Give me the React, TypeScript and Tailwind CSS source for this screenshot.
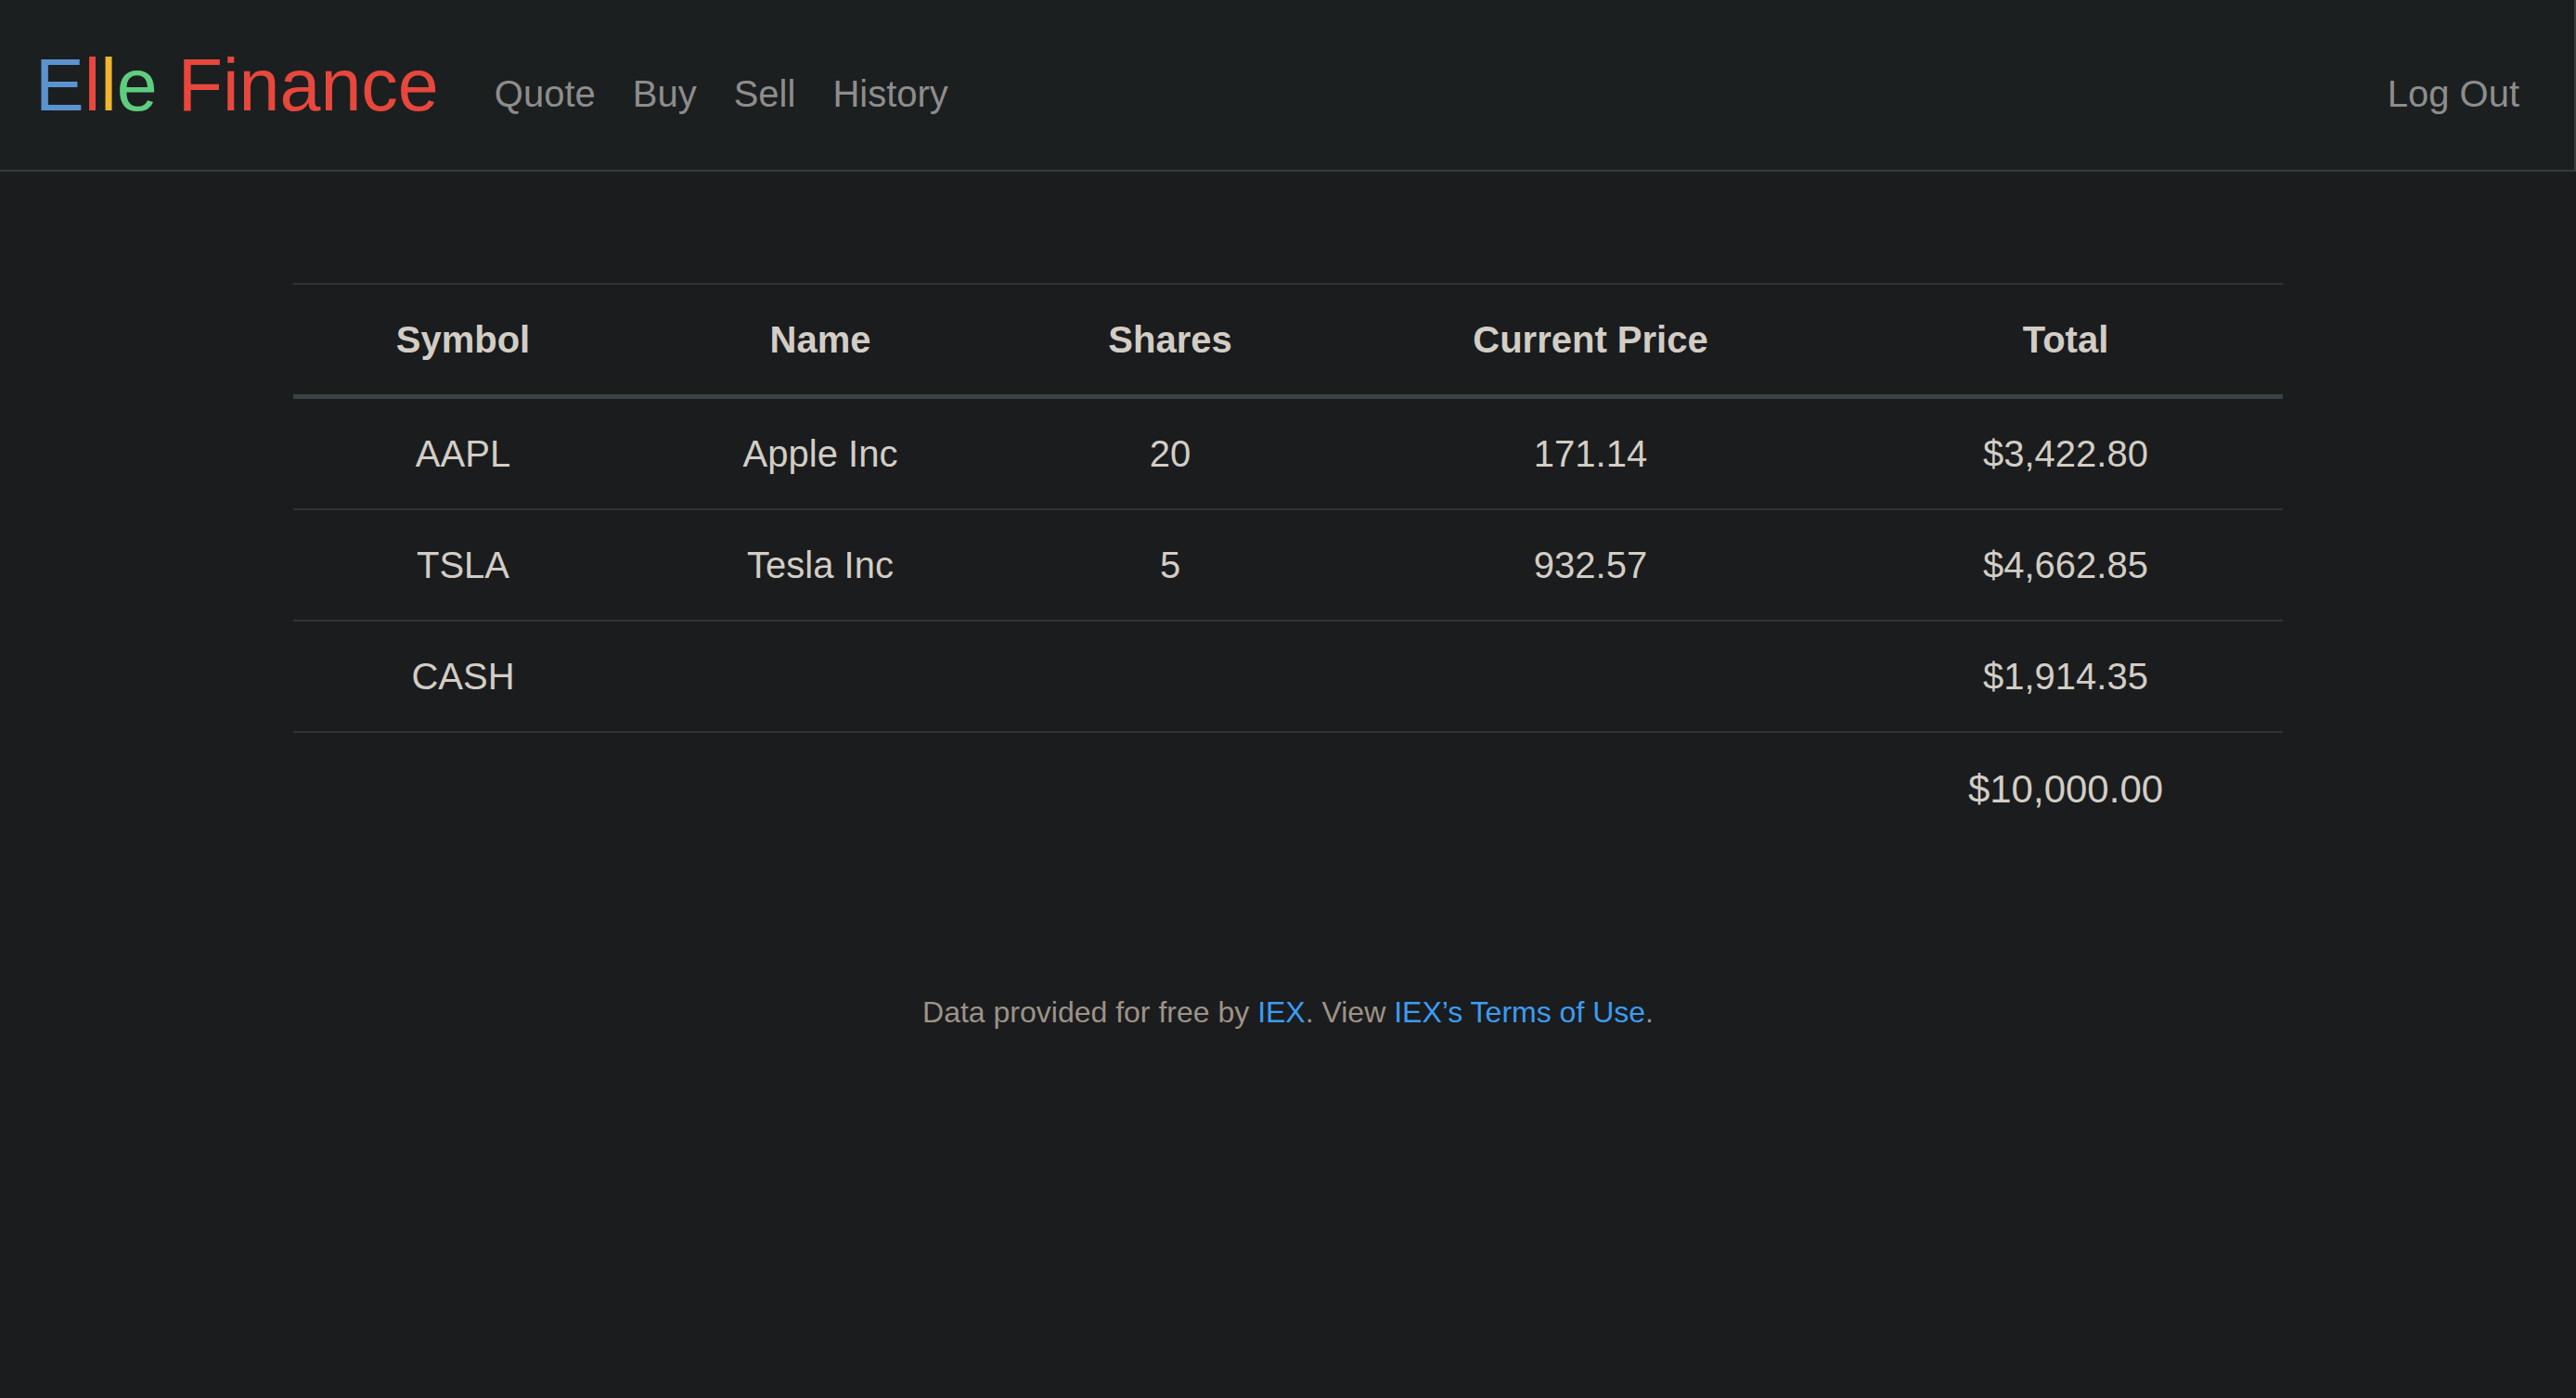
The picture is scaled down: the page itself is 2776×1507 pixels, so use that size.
export default function App() {
  const holdings = [
    { symbol: "AAPL", name: "Apple Inc", shares: "20", price: "171.14", total: "$3,422.80" },
    { symbol: "TSLA", name: "Tesla Inc", shares: "5", price: "932.57", total: "$4,662.85" },
    { symbol: "CASH", name: "", shares: "", price: "", total: "$1,914.35" },
  ];

  const links = ["Quote", "Buy", "Sell", "History"];

  return (
    <div
      className="min-h-screen bg-[#1b1c1e] text-[#d2cdc5]"
      style={{ fontFamily: '"Liberation Sans", Arial, sans-serif' }}
    >
      {/* Navbar */}
      <nav className="flex h-[185px] items-center border-r-2 border-b-2 border-[#383c3f] bg-[#1c1f20] pl-[38px] pr-[39px]">
        <a className="text-[79px] leading-[117px]">
          <span className="text-[#5b93d1]">E</span>
          <span className="text-[#e8473d]">l</span>
          <span className="text-[#f0b52f]">l</span>
          <span className="text-[#5fcd80]">e</span>{" "}
          <span className="text-[#e8473d]">Finance</span>
        </a>
        <ul className="ml-[40px] flex pt-[19px]">
          {links.map((link) => (
            <li key={link} className="px-[20px] text-[40px] leading-[60px] text-[#8d8d8d]">
              {link}
            </li>
          ))}
        </ul>
        <ul className="ml-auto flex pt-[19px]">
          <li className="px-[20px] text-[40px] leading-[60px] text-[#8d8d8d]">Log Out</li>
        </ul>
      </nav>

      {/* Portfolio table */}
      <main className="pt-[120px]">
        <table className="mx-auto w-[2144px] table-fixed border-collapse text-center text-[40px] leading-[60px]">
          <colgroup>
            <col className="w-[366px]" />
            <col className="w-[404px]" />
            <col className="w-[350px]" />
            <col className="w-[556px]" />
            <col className="w-[468px]" />
          </colgroup>
          <thead>
            <tr className="border-t-2 border-b-[5px] border-t-[#303335] border-b-[#384244]">
              <th className="py-[29px] font-bold">Symbol</th>
              <th className="py-[29px] font-bold">Name</th>
              <th className="py-[29px] font-bold">Shares</th>
              <th className="py-[29px] font-bold">Current Price</th>
              <th className="py-[29px] font-bold">Total</th>
            </tr>
          </thead>
          <tbody>
            {holdings.map((row, i) => (
              <tr key={row.symbol} className={i === 0 ? "" : "border-t-2 border-[#303335]"}>
                <td className="py-[29px]">{row.symbol}</td>
                <td className="py-[29px]">{row.name}</td>
                <td className="py-[29px]">{row.shares}</td>
                <td className="py-[29px]">{row.price}</td>
                <td className="py-[29px]">{row.total}</td>
              </tr>
            ))}
          </tbody>
          <tfoot>
            <tr className="border-t-2 border-[#303335]">
              <td colSpan={4} />
              <td className="py-[29px] text-[42px] leading-[64px]">$10,000.00</td>
            </tr>
          </tfoot>
        </table>
      </main>

      {/* Footer */}
      <footer className="mt-[155px] text-center text-[32px] leading-[48px] text-[#9c9387]">
        Data provided for free by <a className="text-[#3b9cf2]">IEX</a>. View{" "}
        <a className="text-[#3b9cf2]">IEX’s Terms of Use</a>.
      </footer>
    </div>
  );
}
